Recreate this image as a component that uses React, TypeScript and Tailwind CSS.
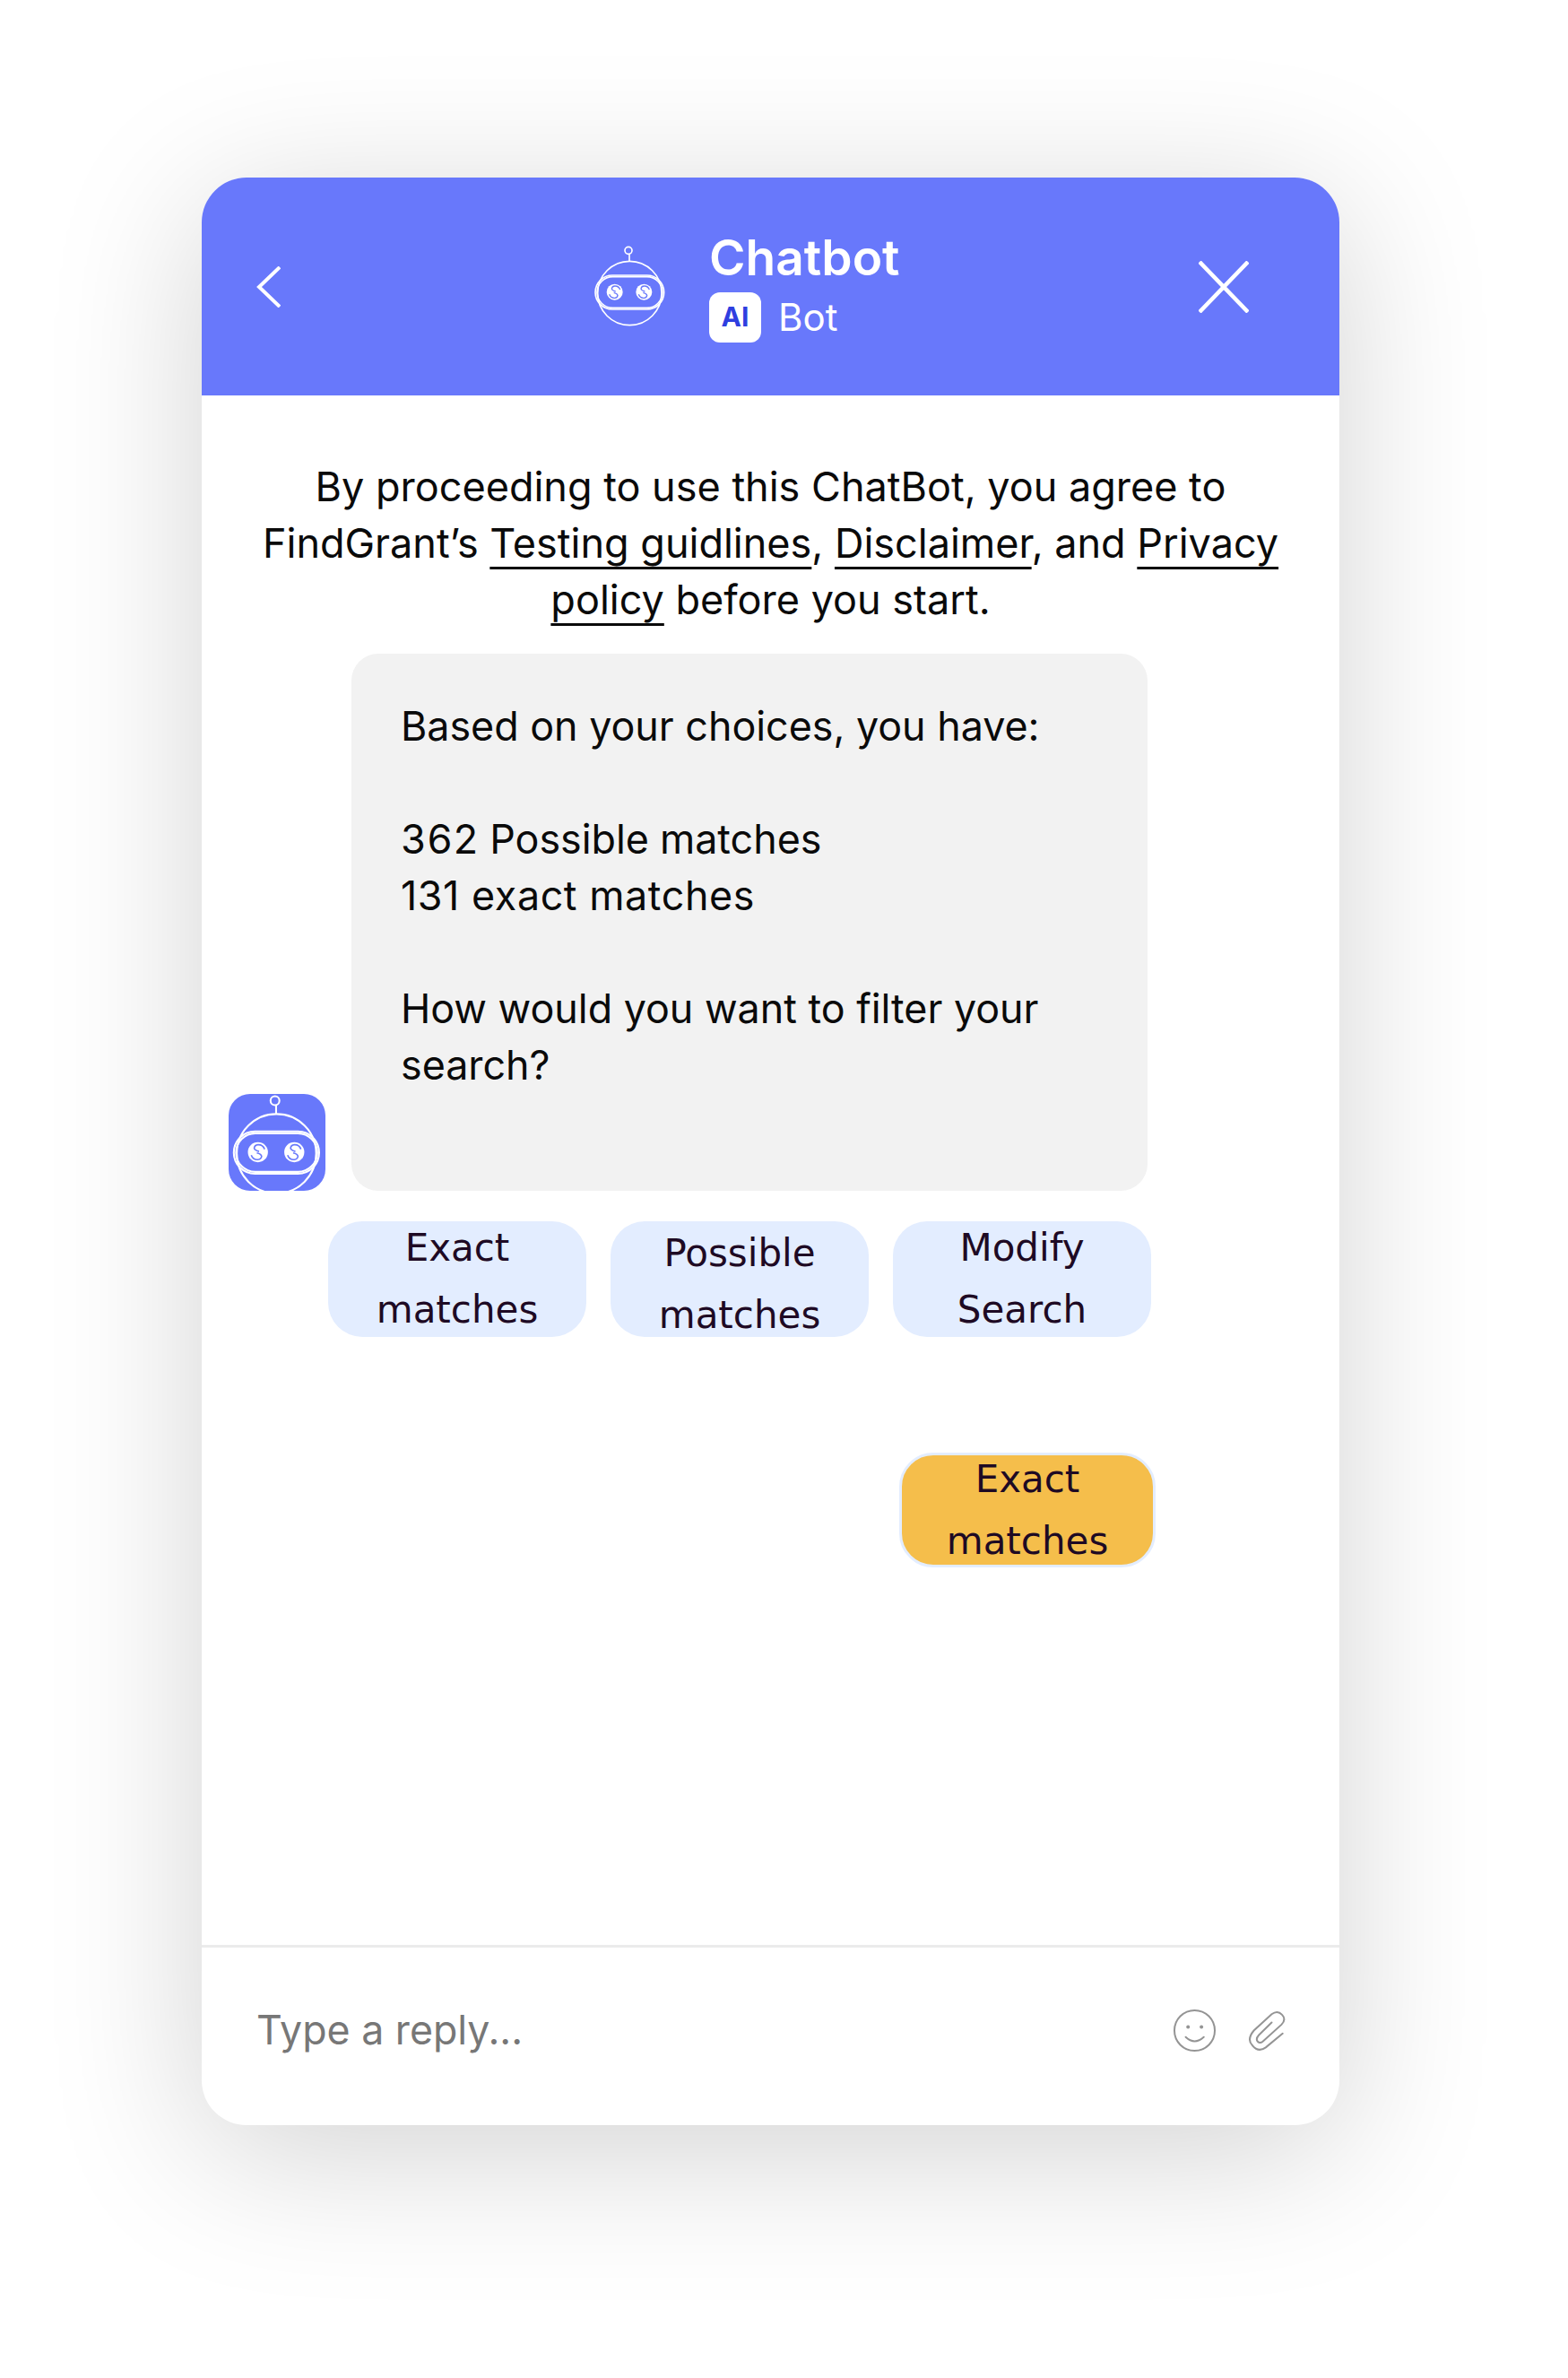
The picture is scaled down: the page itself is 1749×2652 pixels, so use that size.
function RobotEye({ x }: { x: number }) {
    return (
        <g transform={`translate(${x} 197)`}>
            <circle r="27" fill="white" stroke="none" />
            <path d="M18 -8 Q13 -21 0 -20 Q-9 -19 -10 -11 Q-9 -5 3 -2" stroke="#6878fb" strokeWidth="4" />
            <path d="M-18 8 Q-13 21 0 20 Q9 19 10 11 Q9 5 -3 2" stroke="#6878fb" strokeWidth="4" />
        </g>
    );
}

function RobotFace({ box, className }: { box: string; className: string }) {
    return (
        <svg viewBox={box} className={className} fill="none" stroke="white" strokeWidth="5">
            <circle cx="183" cy="58" r="12" />
            <path d="M186 70 V94" />
            <circle cx="187" cy="201" r="107" />
            <rect x="72" y="141" width="230" height="114" rx="57" />
            <rect x="78" y="146" width="219" height="104" rx="52" />
            <RobotEye x={137} />
            <RobotEye x={235} />
        </svg>
    );
}

function QuickReply({ lines, extra }: { lines: string[]; extra: string }) {
    return (
        <div className={"w-[288px] h-[129px] rounded-[38px] bg-[#e3edff] text-[#1e0a24] text-[42px] leading-[69px] text-center font-['DejaVu_Sans',sans-serif] flex flex-col justify-center " + extra}>
            {lines.map((line) => (
                <div key={line}>{line}</div>
            ))}
        </div>
    );
}

const linkStyle = "underline underline-offset-[10px] decoration-[3px] [text-decoration-skip-ink:none]";

export default function App() {
    return (
        <div className="w-[1749px] h-[2652px] bg-white pl-[225px] pt-[198px] overflow-hidden font-['Inter',sans-serif] text-[#0a0a0a]">
            <div className="w-[1269px] h-[2172px] rounded-[50px] bg-white shadow-[0_30px_170px_rgba(0,0,0,0.18)] flex flex-col overflow-hidden">
                <header className="h-[243px] shrink-0 bg-[#6878fb] flex items-center pl-[61px] pr-[101px] text-white">
                    <svg viewBox="0 0 27 46" className="w-[27px] h-[46px]" fill="none" stroke="white" strokeWidth="4">
                        <path d="M26 1 L3 23 L26 45" />
                    </svg>
                    <div className="ml-[347px] flex items-center">
                        <RobotFace box="0 0 360 360" className="w-[120px] h-[120px] -mx-[20px]" />
                        <div className="ml-[51px] flex flex-col pb-[3px]">
                            <div className="text-[55px] leading-[64px] font-semibold">Chatbot</div>
                            <div className="flex items-center mt-[7px]">
                                <span className="w-[58px] h-[56px] rounded-[12px] bg-white text-[#2f3fe0] text-[30px] font-bold flex items-center justify-center">AI</span>
                                <span className="ml-[19px] text-[42px] leading-[56px]">Bot</span>
                            </div>
                        </div>
                    </div>
                    <svg viewBox="0 0 56 58" className="ml-auto w-[56px] h-[58px]" fill="none" stroke="white" strokeWidth="4.5">
                        <path d="M1 1 L55 57 M55 1 L1 57" />
                    </svg>
                </header>

                <main className="flex-1 flex flex-col min-h-0">
                    <p className="mt-[70px] px-[40px] text-center text-[45px] leading-[63px]">
                        By proceeding to use this ChatBot, you agree to FindGrant’s{" "}
                        <span className={linkStyle}>Testing guidlines</span>,{" "}
                        <span className={linkStyle}>Disclaimer</span>, and{" "}
                        <span className={linkStyle}>Privacy policy</span> before you start.
                    </p>

                    <div className="mt-[29px] ml-[30px] flex items-end gap-[29px]">
                        <div className="w-[108px] h-[108px] rounded-[24px] bg-[#6878fb] overflow-hidden shrink-0">
                            <RobotFace box="58 40 261 261" className="w-[108px] h-[108px]" />
                        </div>
                        <div className="w-[888px] h-[599px] rounded-[30px] bg-[#f2f2f2] pt-[50px] px-[55px] text-[44.8px] leading-[63px]">
                            <div>Based on your choices, you have:</div>
                            <div className="mt-[63px] tabular-nums">362 Possible matches</div>
                            <div className="tracking-[0.6px]">131 exact matches</div>
                            <div className="mt-[63px]">How would you want to filter your search?</div>
                        </div>
                    </div>

                    <div className="mt-[34px] ml-[141px] flex gap-[27px]">
                        <QuickReply lines={["Exact", "matches"]} extra="pb-[2px]" />
                        <QuickReply lines={["Possible", "matches"]} extra="pt-[10px]" />
                        <QuickReply lines={["Modify", "Search"]} extra="pb-[2px]" />
                    </div>

                    <div className="mt-[129px] ml-[778px]">
                        <div className="w-[286px] h-[128px] rounded-[38px] bg-[#f5be4b] border-[3px] border-[#e3edff] text-[#1e0a24] text-[42px] leading-[69px] text-center font-['DejaVu_Sans',sans-serif] flex flex-col justify-center">
                            <div>Exact</div>
                            <div>matches</div>
                        </div>
                    </div>
                </main>

                <footer className="h-[201px] shrink-0 border-t-[3px] border-[#ebebeb] flex items-center pl-[61px] pr-[54px] pb-[14px]">
                    <div className="text-[44.7px] leading-[63px] text-[#777777]">Type a reply...</div>
                    <svg viewBox="75 55 160 160" className="ml-auto w-[53px] h-[53px]" fill="none" stroke="#949494" strokeWidth="6">
                        <circle cx="155" cy="135" r="68" />
                        <circle cx="133" cy="123" r="6" fill="#949494" stroke="none" />
                        <circle cx="178" cy="123" r="6" fill="#949494" stroke="none" />
                        <path d="M125 157 Q155 185 186 157" strokeLinecap="round" />
                    </svg>
                    <svg viewBox="320 55 160 160" className="ml-[28px] w-[53px] h-[53px]" fill="none" stroke="#949494" strokeWidth="6">
                        <path d="M452 145 L395 192 Q370 210 350 185 Q330 165 355 135 L415 80 Q435 65 450 82 Q465 98 448 115 L385 172 Q375 180 368 172 Q360 163 372 150 L415 108" strokeLinecap="round" />
                    </svg>
                </footer>
            </div>
        </div>
    );
}
